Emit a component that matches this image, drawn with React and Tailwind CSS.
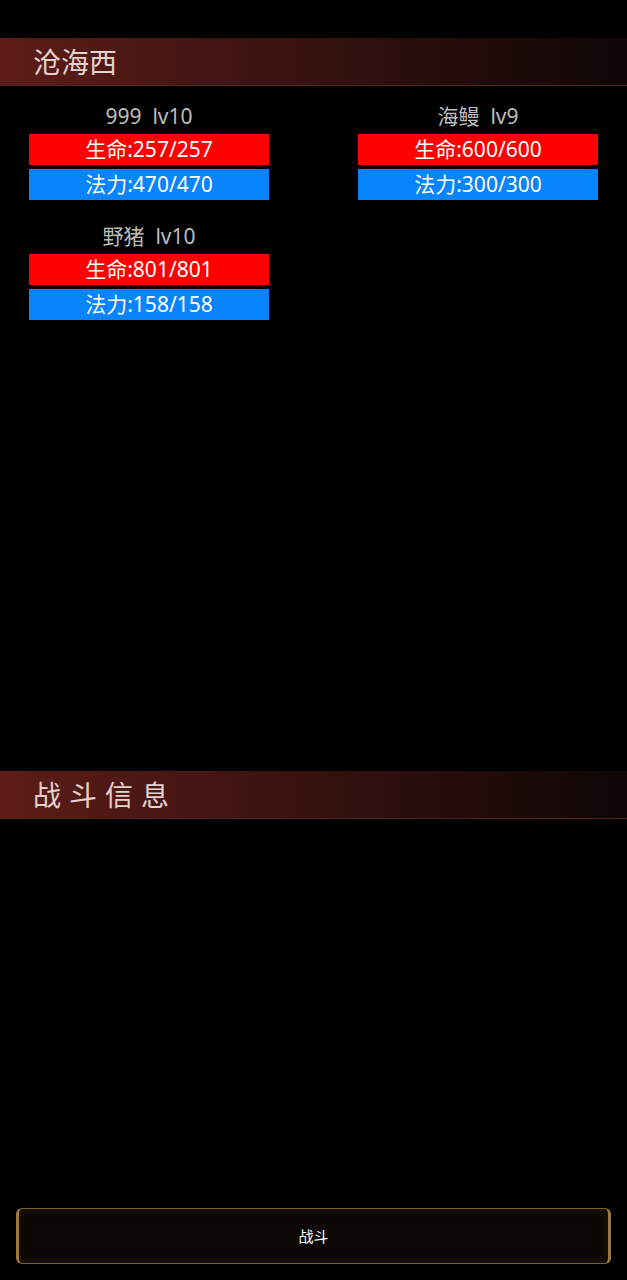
const party = [
  { name: "999", level: 10, hp: [257, 257], mp: [470, 470] },
  { name: "海鳗", level: 9, hp: [600, 600], mp: [300, 300] },
  { name: "野猪", level: 10, hp: [801, 801], mp: [158, 158] },
];

function Header({ children, className = "" }) {
  return (
    <div className="h-[48px] flex items-center pl-[33px] bg-gradient-to-r from-[#5e1c18] via-[#361210] to-[#100606] border-b border-[#4e2624]">
      <span className={`text-[28px] text-[#e6d2cc] leading-none ${className}`}>{children}</span>
    </div>
  );
}

function Unit({ u }) {
  return (
    <div className="w-[240px] flex flex-col">
      <div className="h-[28px] flex items-center justify-center text-[21px] text-[#bdbdbd] leading-none">
        {u.name}&nbsp;&nbsp;lv{u.level}
      </div>
      <div className="mt-[4px] h-[31px] bg-[#ff0000] flex items-center justify-center text-[21px] text-white leading-none">
        生命:{u.hp[0]}/{u.hp[1]}
      </div>
      <div className="mt-[4px] h-[31px] bg-[#0984ff] flex items-center justify-center text-[21px] text-white leading-none">
        法力:{u.mp[0]}/{u.mp[1]}
      </div>
    </div>
  );
}

export default function App() {
  return (
    <div
      className="h-[1280px] w-full bg-black flex flex-col pt-[38px]"
      style={{ fontFamily: '"Noto Sans", "Noto Sans CJK SC", sans-serif' }}
    >
      <Header>沧海西</Header>

      <div className="h-[685px] pt-[16px] pl-[29px]">
        <div className="grid grid-cols-[240px_240px] gap-x-[89px] gap-y-[22px]">
          {party.map((u) => (
            <Unit key={u.name} u={u} />
          ))}
        </div>
      </div>

      <Header className="tracking-[8px]">战斗信息</Header>

      <div className="flex-1" />

      <div className="mx-[16px] mb-[16px]">
        <button className="w-full h-[56px] rounded-[6px] bg-[#0c0805] border border-[#7a5e36] border-x-[3px] border-x-[#9a7a44] flex items-center justify-center text-[15px] text-white shadow-[inset_0_0_8px_rgba(120,80,30,0.25)]">
          战斗
        </button>
      </div>
    </div>
  );
}
